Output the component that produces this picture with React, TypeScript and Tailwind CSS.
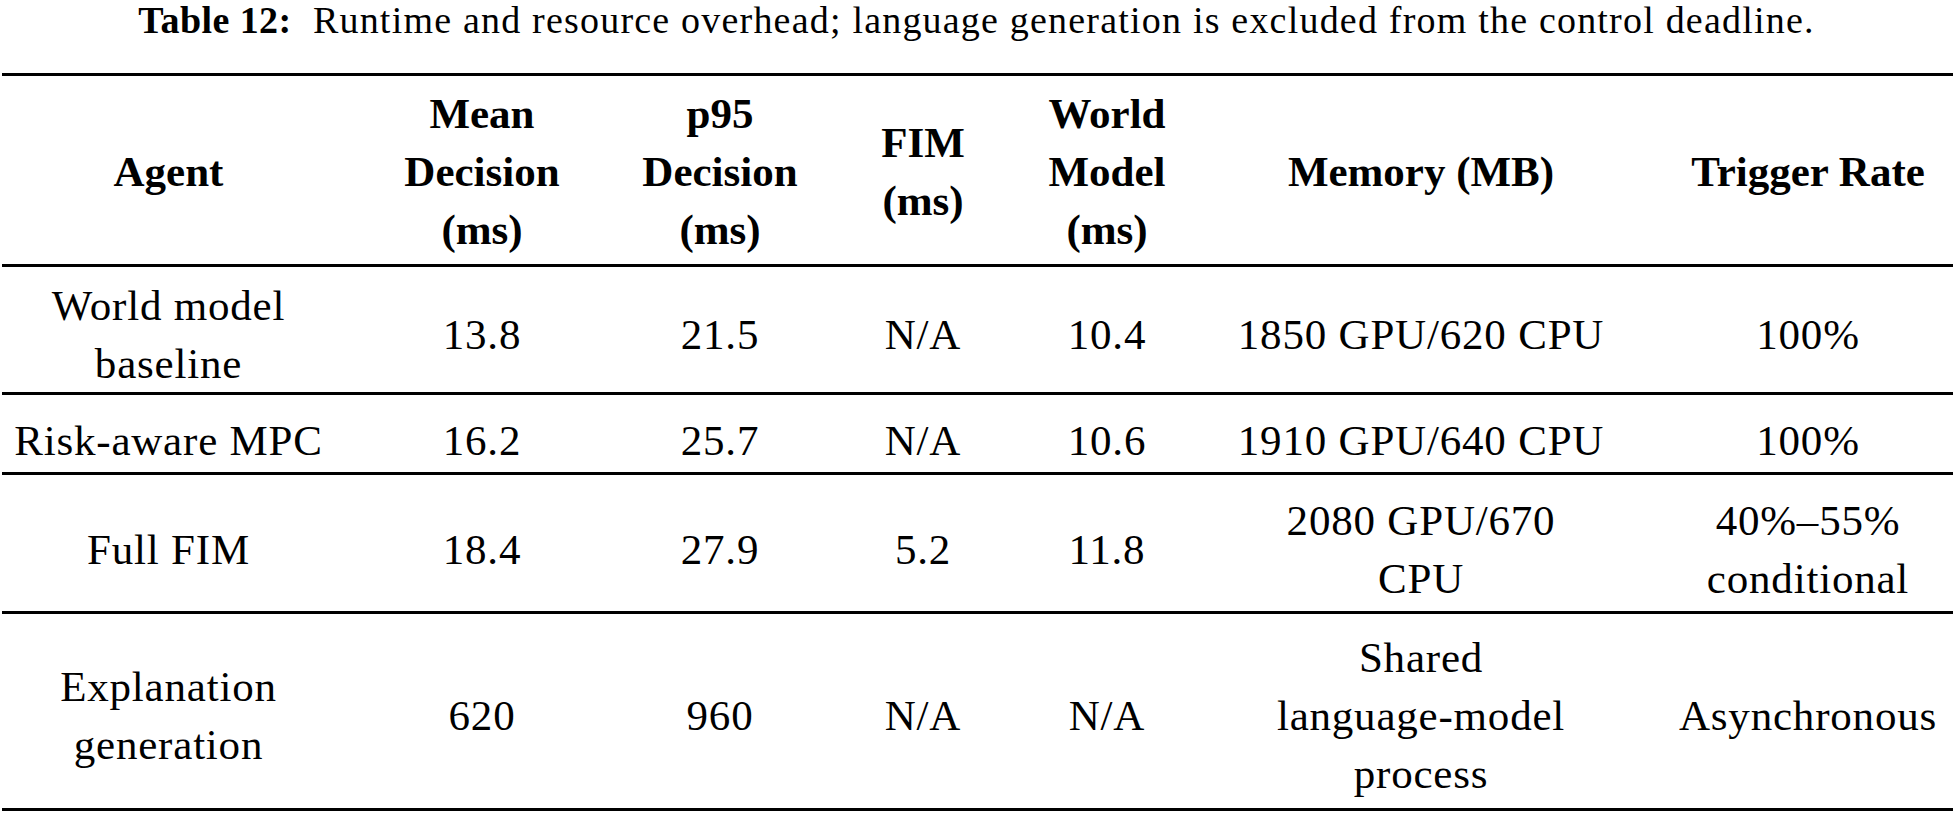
import React from "react";

const cols = "grid grid-cols-[333px_294px_182px_224px_144px_484px_290px]";

type Cell = string[];

const header: Cell[] = [
  ["Agent"],
  ["Mean", "Decision", "(ms)"],
  ["p95", "Decision", "(ms)"],
  ["FIM", "(ms)"],
  ["World", "Model", "(ms)"],
  ["Memory (MB)"],
  ["Trigger Rate"],
];

const rows: { h: string; pad: string; cells: Cell[] }[] = [
  {
    h: "h-[125px]",
    pad: "pt-[10px]",
    cells: [
      ["World model", "baseline"],
      ["13.8"],
      ["21.5"],
      ["N/A"],
      ["10.4"],
      ["1850 GPU/620 CPU"],
      ["100%"],
    ],
  },
  {
    h: "h-[77px]",
    pad: "pt-[14px]",
    cells: [
      ["Risk-aware MPC"],
      ["16.2"],
      ["25.7"],
      ["N/A"],
      ["10.6"],
      ["1910 GPU/640 CPU"],
      ["100%"],
    ],
  },
  {
    h: "h-[136px]",
    pad: "pt-[14px]",
    cells: [
      ["Full FIM"],
      ["18.4"],
      ["27.9"],
      ["5.2"],
      ["11.8"],
      ["2080 GPU/670", "CPU"],
      ["40%–55%", "conditional"],
    ],
  },
  {
    h: "h-[194px]",
    pad: "pt-[10px]",
    cells: [
      ["Explanation", "generation"],
      ["620"],
      ["960"],
      ["N/A"],
      ["N/A"],
      ["Shared", "language-model", "process"],
      ["Asynchronous"],
    ],
  },
];

function CellView({ lines, bold, pad }: { lines: Cell; bold?: boolean; pad: string }) {
  return (
    <div className={`flex flex-col items-center justify-center text-center ${pad}`}>
      {lines.map((l, i) => (
        <div
          key={i}
          className={
            bold
              ? "whitespace-nowrap font-bold text-[43px] leading-[58px]"
              : "whitespace-nowrap text-[43px] leading-[58px] tracking-[0.8px]"
          }
        >
          {l}
        </div>
      ))}
    </div>
  );
}

export default function App() {
  return (
    <div className="w-[1953px] h-[813px] bg-white text-black [font-family:Liberation_Serif,serif] overflow-hidden">
      <div className="h-[73px] text-center text-[38px] leading-[41px] tracking-[1.2px] whitespace-nowrap">
        <span className="font-bold tracking-[0.4px]">Table 12:</span>
        <span>{"\u00a0 "}Runtime and resource overhead; language generation is excluded from the control deadline.</span>
      </div>
      <div className="ml-[2px] flex flex-col">
        <div className={`${cols} h-[191px] border-t-[3px] border-black`}>
          {header.map((c, i) => (
            <CellView key={i} lines={c} bold pad="pt-[4px]" />
          ))}
        </div>
        {rows.map((r, ri) => (
          <div
            key={ri}
            className={`${cols} ${r.h} border-t-[3px] border-black box-content ${
              ri === rows.length - 1 ? "border-b-[3px]" : ""
            }`}
          >
            {r.cells.map((c, i) => (
              <CellView key={i} lines={c} pad={r.pad} />
            ))}
          </div>
        ))}
      </div>
    </div>
  );
}
